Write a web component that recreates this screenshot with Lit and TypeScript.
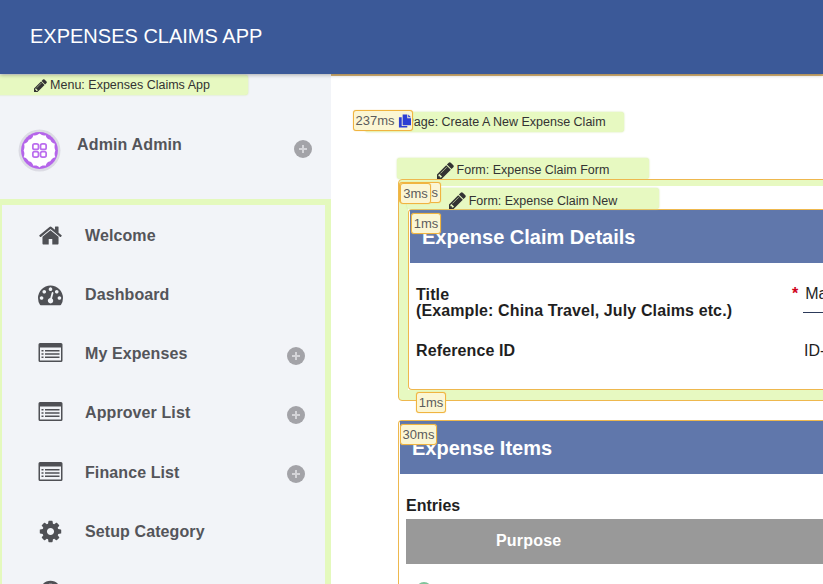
import { LitElement, html, css } from "lit";
import { customElement } from "lit/decorators.js";

const PENCIL = "M491 1536l91-91-235-235-91 91v107h128v128h107zm523-928q0-22-22-22-10 0-17 7l-542 542q-7 7-7 17 0 22 22 22 10 0 17-7l542-542q7-7 7-17zm-54-192l416 416-832 832h-416v-416zm683 96q0 53-37 90l-166 166-416-416 166-165q36-38 90-38 53 0 91 38l235 234q37 39 37 91z";
const HOME = "M1472 992v480q0 26-19 45t-45 19h-384v-384h-256v384h-384q-26 0-45-19t-19-45v-480q0-1 .5-3t.5-3l575-474 575 474q1 2 1 6zm223-69l-62 74q-8 9-21 11h-3q-13 0-21-7l-692-577-692 577q-12 8-24 7-13-2-21-11l-62-74q-8-10-7-23.5t11-21.5l719-599q32-26 76-26t76 26l244 204v-195q0-14 9-23t23-9h192q14 0 23 9t9 23v408l219 182q10 8 11 21.5t-7 23.5z";
const COG = "M1152 896q0-106-75-181t-181-75-181 75-75 181 75 181 181 75 181-75 75-181zm512-109v222q0 12-8 23t-20 13l-185 28q-19 54-39 91 35 50 107 138 10 12 10 25t-9 23q-27 37-99 108t-94 71q-12 0-26-9l-138-108q-44 23-91 38-16 136-29 186-7 28-36 28h-222q-14 0-24.5-8.5t-11.5-21.5l-28-184q-49-16-90-37l-141 107q-10 9-25 9-14 0-25-11-126-114-165-168-7-10-7-23 0-12 8-23 15-21 51-66.5t54-70.5q-27-50-41-99l-183-27q-13-2-21-12.5t-8-23.5v-222q0-12 8-23t19-13l186-28q14-46 39-92-40-57-107-138-10-12-10-24 0-10 9-23 26-36 98.5-107.5t94.5-71.5q13 0 26 10l138 107q44-23 91-38 16-136 29-186 7-28 36-28h222q14 0 24.5 8.5t11.5 21.5l28 184q49 16 90 37l142-107q9-9 24-9 13 0 25 10 129 119 165 170 7 8 7 22 0 12-8 23-15 21-51 66.5t-54 70.5q26 50 41 98l183 28q13 2 21 12.5t8 23.5z";
const GAUGE = "M384 1152q0-53-37.5-90.5t-90.5-37.5-90.5 37.5-37.5 90.5 37.5 90.5 90.5 37.5 90.5-37.5 37.5-90.5zm192-448q0-53-37.5-90.5t-90.5-37.5-90.5 37.5-37.5 90.5 37.5 90.5 90.5 37.5 90.5-37.5 37.5-90.5zm428 481l101-382q6-26-7.5-48.5t-38.5-29.5-48 6.5-30 39.5l-101 382q-60 5-107 43.5t-63 98.5q-20 77 20 146t117 89 146-20 89-117q16-60-6-117t-72-91zm660-33q0-53-37.5-90.5t-90.5-37.5-90.5 37.5-37.5 90.5 37.5 90.5 90.5 37.5 90.5-37.5 37.5-90.5zm-640-640q0-53-37.5-90.5t-90.5-37.5-90.5 37.5-37.5 90.5 37.5 90.5 90.5 37.5 90.5-37.5 37.5-90.5zm448 192q0-53-37.5-90.5t-90.5-37.5-90.5 37.5-37.5 90.5 37.5 90.5 90.5 37.5 90.5-37.5 37.5-90.5zm320 448q0 261-141 483-19 29-54 29h-1402q-35 0-54-29-141-221-141-483 0-182 71-348t191-286 286-191 348-71 348 71 286 191 191 286 71 348z";

const pencil = (cls: string) => html`<svg class=${cls} viewBox="128 128 1536 1536"><path d=${PENCIL} fill="currentColor"></path></svg>`;
const faIcon = (d: string) => html`<svg class="ico" viewBox="0 0 1792 1792"><path d=${d} fill="#4f5055"></path></svg>`;
const listIcon = html`<svg class="ico lift" viewBox="0 0 25 20"><path fill-rule="evenodd" fill="#4f5055" d="M2 0.5h21a1.5 1.5 0 0 1 1.5 1.5v16a1.5 1.5 0 0 1-1.5 1.5h-21a1.5 1.5 0 0 1-1.5-1.5v-16a1.5 1.5 0 0 1 1.5-1.5zM2 5v13h21v-13z"></path><path fill="#4f5055" d="M3.5 7.5h2v1.6h-2zM7 7.5h14.500v1.600h-14.500zM3.500 10.700h2v1.600h-2zM7 10.700h14.500v1.600h-14.500zM3.500 13.900h2v1.600h-2zM7 13.900h14.500v1.600h-14.500z"></path></svg>`;
const infoIcon = html`<svg class="ico" viewBox="0 0 1792 1792"><path fill="#4f5055" fill-rule="evenodd" d="M896 128a768 768 0 1 0 0 1536a768 768 0 1 0 0-1536zM780 340h232v230h-232z"></path></svg>`;
const plus = html`<span class="plus"><svg viewBox="0 0 10 10"><path d="M5 1v8M1 5h8" stroke="#d4d4d8" stroke-width="2"></path></svg></span>`;

const avatar = html`<svg class="avatar" viewBox="0 0 42 42">
  <circle cx="21" cy="21" r="20.500" fill="#dcdce4"></circle>
  <circle cx="21" cy="21" r="18" fill="#b565ea"></circle>
  <path d="M21 4.500c2.500 2 4.500 2 6 1.500 .5 2.500 2 4 4.500 4.500 1 2.500 2.500 3.500 4.500 4-.5 3-.5 4 .5 6.500-1 2.500-1 4 0 6.500-2.500.5-4 2-5 4-2.500.5-4 2-4.500 4.500-2-.5-4-.5-6 1.500-2-2-4-2-6-1.500-.5-2.500-2-4-4.500-4.500-1-2-2.500-3.500-5-4 1-2.500 1-4 0-6.500 1-2.500 1-3.500 .5-6.500 2-.5 3.500-1.500 4.500-4 2.500-.5 4-2 4.500-4.500 1.500 .5 3.500 .5 6-1.500z" fill="#fff"></path>
  <g fill="none" stroke="#bb6eee" stroke-width="1.700">
    <rect x="14.500" y="14.500" width="5.500" height="5.500" rx="1.800"></rect>
    <rect x="22" y="14.500" width="5.500" height="5.500" rx="1.800"></rect>
    <rect x="14.500" y="22" width="5.500" height="5.500" rx="1.800"></rect>
    <rect x="22" y="22" width="5.500" height="5.500" rx="1.800"></rect>
  </g>
</svg>`;

const NAV = [
  { label: "Welcome", icon: faIcon(HOME), more: false },
  { label: "Dashboard", icon: faIcon(GAUGE), more: false },
  { label: "My Expenses", icon: listIcon, more: true },
  { label: "Approver List", icon: listIcon, more: true },
  { label: "Finance List", icon: listIcon, more: true },
  { label: "Setup Category", icon: faIcon(COG), more: false },
  { label: "", icon: infoIcon, more: true },
];

@customElement("app-root")
export class AppRoot extends LitElement {
  static styles = css`
    :host { display: block; width: 823px; height: 584px; overflow: hidden; position: relative; background: #fff;
      font-family: "Liberation Sans", Arial, sans-serif; color: #222; }
    .top { height: 74px; background: #3b5998; color: #fff; display: flex; align-items: center; padding: 0 0 2px 30px;
      font-size: 20px; box-shadow: 0 1px 4px rgba(0,0,0,.3); position: relative; z-index: 3; box-sizing: border-box; }
    .shell { display: flex; height: 510px; }
    .side { width: 331px; flex: none; background: #f2f4f8; position: relative; overflow: hidden; }
    .tag { background: #e7f9c1; border-radius: 3px; box-shadow: 0 0 2px #cfe3a0; color: #333; font-size: 12.500px; display: flex;
      align-items: center; justify-content: center; gap: 3px; box-sizing: border-box; height: 21px; }
    .tag .pen { width: 13px; height: 13px; color: #333; flex: none; }
    .tag .penl { width: 17px; height: 17px; color: #333; flex: none; }
    .menu-tag { position: absolute; left: -4px; top: 1px; width: 252px; height: 20px; z-index: 2; }
    .user { height: 125px; display: flex; align-items: flex-start; box-sizing: border-box; padding: 55px 0 0 18px; }
    .avatar { width: 43px; height: 43px; flex: none; filter: blur(.45px); }
    .uname { margin: 6px 0 0 16px; font-weight: 700; font-size: 16px; color: #54555a; letter-spacing: .15px; flex: 1; line-height: 20px; }
    .plus { width: 18px; height: 18px; border-radius: 50%; background: #a3a3a8; display: flex; align-items: center; justify-content: center; flex: none; }
    .plus svg { width: 10px; height: 10px; }
    .user .plus { margin: 11px 19px 0 0; }
    .nav { border: solid #e4f9bd; border-width: 6px 6px 0 2px; height: 400px; box-sizing: border-box; padding-top: 1px; }
    .item { height: 59.250px; display: flex; align-items: center; padding-left: 35.500px; box-sizing: border-box; }
    .ico { width: 25px; height: 25px; flex: none; }
    .lift { margin-top: -3px; }
    .label { margin-left: 22.500px; font-weight: 700; font-size: 16px; color: #54555a; letter-spacing: .1px; flex: 1; }
    .item .plus { margin: 3px 20px 0 0; }
    .main { flex: 1; min-width: 0; position: relative; overflow: hidden; border-top: 2px solid #d9b475; box-sizing: border-box; }
    .page-tag { width: 259px; margin: 36px 0 0 34px; height: 20px; padding-left: 6px; }
    .timer { position: absolute; background: #fbf6d4; border: 1px solid #f0b440; box-shadow: 0 0 1px #f3b941; border-radius: 3px; color: #5c5c5c; font-size: 13px;
      height: 21px; box-sizing: border-box; display: flex; align-items: center; justify-content: center; gap: 3px; z-index: 4; }
    .t237 { left: 22px; top: 34px; width: 60px; }
    .t237 svg { width: 13px; height: 14px; flex: none; }
    .t13 { left: 68px; top: 106px; width: 42px; justify-content: flex-end; padding-right: 2px; }
    .t3 { left: 69px; top: 107px; width: 31px; z-index: 5; }
    .t1a { left: 80px; top: 137px; width: 30px; }
    .t1b { left: 85px; top: 316px; width: 30px; }
    .t30 { left: 69px; top: 348px; width: 37px; }
    .form-tag { width: 252px; margin: 26px 0 0 66px; padding-top: 3px; }
    .outer { margin: 0 -20px 0 67px; border: 1px solid #eeb84e; border-radius: 4px 0 0 4px; background: #e7f9c1; padding: 6px 0 10px 9px;
      height: 222px; box-sizing: border-box; }
    .white { background: #fff; height: 204px; border-radius: 4px 0 0 0; position: relative; }
    .inner-tag { width: 252px; position: relative; left: -1px; top: 2px; padding-top: 4px; }
    .card { border: 1px solid #eeb84e; border-right: 0; border-radius: 4px 0 0 4px; background: #fff; height: 181px; margin-top: 2px; box-sizing: border-box; }
    .bar { background: #6077ab; color: #fff; font-weight: 700; font-size: 20px; height: 53px; display: flex; align-items: center; padding-top: 1px; box-sizing: border-box; }
    .card .bar { margin-left: 1px; padding-left: 12px; }
    .row { display: flex; font-size: 16px; line-height: 16px; padding-left: 7px; font-weight: 700; color: #1f1f1f; letter-spacing: .12px; }
    .row.r1 { margin-top: 24px; }
    .row.r2 { margin-top: 24px; }
    .row .cap { width: 373px; flex: none; }
    .val { font-weight: 400; position: relative; white-space: nowrap; letter-spacing: 0; }
    .r1 .val { margin-top: -1px; }
    .req { color: #d0021b; font-weight: 700; margin: 0 5px 0 3px; }
    .ma { display: inline-block; border-bottom: 1px solid #2c3a5a; padding: 0 0 10px 2px; width: 40px; line-height: 16px; }
    .r2 .val { padding-left: 15px; }
    .second { margin: 19px -20px 0 67px; border: 1px solid #eeb84e; border-right: 0; border-radius: 4px 0 0 0; height: 200px; box-sizing: border-box; background: #fff; }
    .second .bar { margin-left: 1px; padding-left: 12px; }
    .entries { font-weight: 700; font-size: 16px; color: #1f1f1f; margin: 24px 0 0 7px; line-height: 16px; }
    .thead { background: #999; color: #fff; font-weight: 700; font-size: 16px; height: 45px; margin: 5px 0 0 7px; display: flex; align-items: center; padding: 0 0 2px 90px; box-sizing: border-box; letter-spacing: .2px; }
    .dot { width: 16px; height: 16px; border-radius: 50%; border: 2px solid #7fc39a; margin: 18px 0 0 17px; box-sizing: border-box; }
  `;

  render() {
    return html`
      <div class="top">EXPENSES CLAIMS APP</div>
      <div class="shell">
        <aside class="side">
          <div class="tag menu-tag">${pencil("pen")}<span>Menu: Expenses Claims App</span></div>
          <div class="user">${avatar}<div class="uname">Admin Admin</div>${plus}</div>
          <nav class="nav">
            ${NAV.map(n => html`<div class="item">${n.icon}<span class="label">${n.label}</span>${n.more ? plus : ""}</div>`)}
          </nav>
        </aside>
        <main class="main">
          <div class="tag page-tag">${pencil("pen")}<span>Page: Create A New Expense Claim</span></div>
          <div class="timer t237">237ms<svg viewBox="0 0 14 15"><path fill="#2d3fd3" d="M5 0.500h5v4h4v7.500h-9zM11 0.500l3 3h-3zM1 3.500h3v9.500h6v1.500h-9z"></path></svg></div>
          <div class="tag form-tag">${pencil("penl")}<span>Form: Expense Claim Form</span></div>
          <div class="outer">
            <div class="white">
              <div class="tag inner-tag">${pencil("penl")}<span>Form: Expense Claim New</span></div>
              <div class="card">
                <div class="bar">Expense Claim Details</div>
                <div class="row r1"><div class="cap">Title<br />(Example: China Travel, July Claims etc.)</div><div class="val"><span class="req">*</span><span class="ma">Ma</span></div></div>
                <div class="row r2"><div class="cap">Reference ID</div><div class="val">ID-</div></div>
              </div>
            </div>
          </div>
          <section class="second">
            <div class="bar">Expense Items</div>
            <div class="entries">Entries</div>
            <div class="thead">Purpose</div>
            <div class="dot"></div>
          </section>
          <div class="timer t13">13ms</div>
          <div class="timer t3">3ms</div>
          <div class="timer t1a">1ms</div>
          <div class="timer t1b">1ms</div>
          <div class="timer t30">30ms</div>
        </main>
      </div>
    `;
  }
}
